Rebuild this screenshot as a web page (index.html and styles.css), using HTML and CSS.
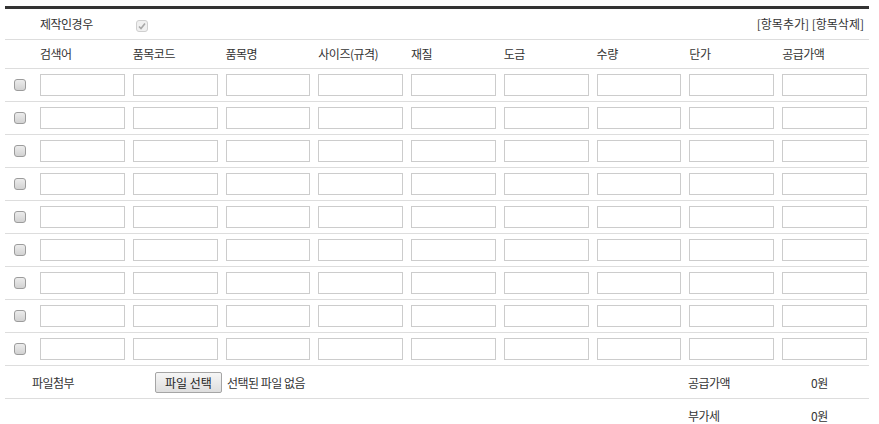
FILE: index.html
```html
<!DOCTYPE html>
<html>
<head>
	<title>품목 등록</title>
	<link rel="stylesheet" href="styles.css">
</head>
<body>
<div id="container">

	<table class="items">
		<colgroup>
			<col class="col-chk">
			<col span="9">
		</colgroup>
		<tr class="opt-row">
			<td></td>
			<td>제작인경우</td>
			<td><span class="chk-disabled"><svg width="8" height="8" viewBox="0 0 8 8"><path d="M1 4.5 L3 6.5 L7 1.5" fill="none" stroke="#a8a8a8" stroke-width="1.6"/></svg></span></td>
			<td colspan="7" class="links">[항목추가] [항목삭제]</td>
		</tr>
		<tr class="head-row">
			<td></td>
			<td>검색어</td>
			<td>품목코드</td>
			<td>품목명</td>
			<td>사이즈(규격)</td>
			<td>재질</td>
			<td>도금</td>
			<td>수량</td>
			<td>단가</td>
			<td>공급가액</td>
		</tr>
		<tbody id="rows"></tbody>
	</table>

	<div class="foot-row">
		<div class="foot-label">파일첨부</div>
		<div class="file-box">
			<button type="button" class="file-btn">파일 선택</button>
			<span class="file-name">선택된 파일 없음</span>
		</div>
		<div class="sum-label">공급가액</div>
		<div class="sum-value">0원</div>
	</div>
	<div class="foot-row">
		<div class="foot-label"></div>
		<div class="file-box"></div>
		<div class="sum-label">부가세</div>
		<div class="sum-value">0원</div>
	</div>

</div>

<script type="text/javascript">
	const rows = document.getElementById('rows');

	for (let i = 0; i < 9; i++) {
		let tr = document.createElement('tr');
		tr.className = 'item-row';
		let html = '<td><input type="checkbox" class="chk"></td>';
		for (let j = 0; j < 9; j++) {
			html += '<td><input type="text" class="txt"></td>';
		}
		tr.innerHTML = html;
		rows.appendChild(tr);
	}
</script>
</body>
</html>
```

FILE: styles.css
```css
body {
	margin: 0;
	font-family: "Noto Sans CJK KR", "Noto Sans", sans-serif;
	font-size: 12px;
	color: #333;
	background: #fff;
}

#container {
	width: 864px;
	margin: 6px 0 0 5px;
	border-top: 3px solid #333;
}

.items {
	width: 864px;
	border-collapse: separate;
	border-spacing: 0;
	table-layout: fixed;
}
.col-chk {
	width: 29px;
}
.items td {
	padding: 0 2px 0 6px;
	border-bottom: 1px solid #ddd;
	text-align: left;
	vertical-align: middle;
	white-space: nowrap;
	letter-spacing: -0.5px;
}

.opt-row td {
	height: 30px;
	line-height: 30px;
}
.head-row td {
	height: 28px;
	line-height: 28px;
}
.items .links {
	text-align: right;
	padding-right: 5px;
	letter-spacing: 0;
}

.chk-disabled {
	display: inline-block;
	box-sizing: border-box;
	width: 12px;
	height: 12px;
	margin-left: 3px;
	border: 1px solid #cfcfcf;
	border-radius: 3px;
	background: #f0f0f0;
	vertical-align: middle;
	line-height: 0;
	text-align: center;
}
.chk-disabled svg {
	margin-top: 1px;
}

.items .item-row td {
	padding: 5px 2px 5px 6px;
	line-height: 0;
}
.items .item-row td:first-child {
	padding-left: 4px;
	padding-right: 4px;
}
.chk {
	-webkit-appearance: none;
	appearance: none;
	display: block;
	box-sizing: border-box;
	width: 12px;
	height: 12px;
	margin: 0 auto;
	border: 1px solid #9c9c9c;
	border-radius: 3px;
	background: linear-gradient(#ececec, #d2d2d2);
}
.txt {
	display: block;
	box-sizing: border-box;
	width: 100%;
	height: 22px;
	margin: 0;
	padding: 2px 4px;
	border: 1px solid #ccc;
	background: #fff;
	font-family: inherit;
	font-size: 12px;
}

.foot-row {
	display: flex;
	align-items: center;
	height: 32px;
	border-bottom: 1px solid #ddd;
	letter-spacing: -0.5px;
}
.foot-label {
	width: 123px;
	padding-left: 27px;
}
.file-box {
	flex: 1;
	display: flex;
	align-items: center;
}
.file-btn {
	box-sizing: border-box;
	height: 21px;
	width: 67px;
	padding: 0;
	margin: 0 5px 0 0;
	border: 1px solid #a5a5a5;
	border-radius: 2px;
	background: linear-gradient(#f6f6f6, #dedede);
	font-family: inherit;
	font-size: 12px;
	color: #222;
	letter-spacing: 0;
}
.sum-label {
	width: 123px;
}
.sum-value {
	width: 58px;
}
```
